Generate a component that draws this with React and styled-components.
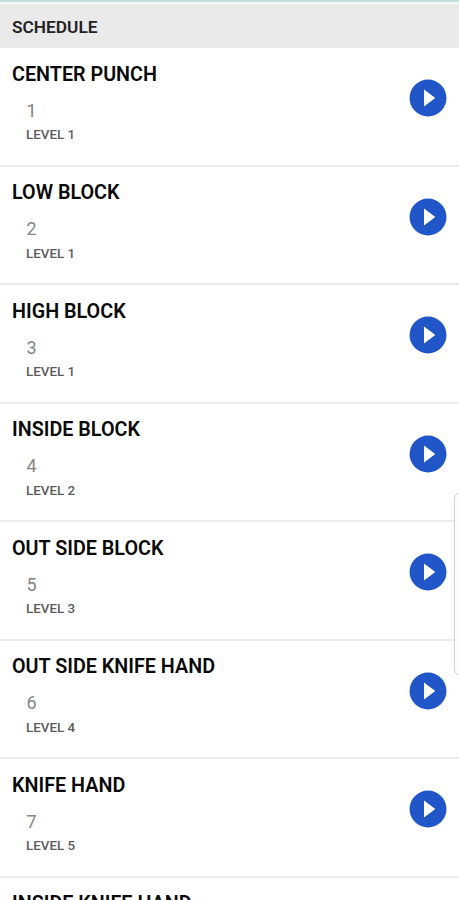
import React from 'react';
import styled, {createGlobalStyle} from 'styled-components';

const GlobalStyle = createGlobalStyle`
  * {
    box-sizing: border-box;
  }

  body {
    margin: 0;
    overflow: hidden;
    background: #fff;
    font-family: Roboto, Arial, sans-serif;
  }
`

const Screen = styled.div`
  position: relative;
  height: 900px;
  overflow: hidden;
`

const StatusStrip = styled.div`
  height: 4px;
  border-top: 2px solid #c5dadb;
  background: #f6f9f9;
`

const Header = styled.h1`
  height: 44px;
  margin: 0;
  padding: 0 12px;
  background: #eaeaea;
  color: #222;
  font-size: 17.3px;
  font-weight: 600;
  line-height: 46px;
`

const List = styled.ul`
  margin: 0;
  padding: 0;
  list-style: none;
`

const Row = styled.li`
  display: flex;
  justify-content: space-between;
  height: 118.55px;
  padding: 13.6px 12px 0;
  border-bottom: 2px solid #ebebeb;
`

const Title = styled.h2`
  margin: 0;
  color: #0a0a0a;
  font-size: 19.75px;
  font-weight: 600;
  line-height: 25px;
`

const Order = styled.p`
  margin: 13px 0 0 14.5px;
  color: #858585;
  font-size: 18px;
  line-height: 22px;
`

const Level = styled.p`
  margin: 4.6px 0 0 14px;
  color: #5c5c5c;
  font-size: 13.4px;
  font-weight: 500;
  line-height: 17px;
`

const PlayButton = styled.button`
  width: 38px;
  height: 38px;
  margin-top: 17.4px;
  padding: 0;
  border: none;
  background: none;
  cursor: pointer;

  svg {
    display: block;
  }
`

const EdgeHandle = styled.div`
  position: absolute;
  top: 492px;
  right: -8px;
  width: 13px;
  height: 184px;
  border: 1px solid #d2d2d2;
  border-radius: 7px;
  background: #fdfdfd;
`

const lessons = [
    {title: 'CENTER PUNCH', level: 1},
    {title: 'LOW BLOCK', level: 1},
    {title: 'HIGH BLOCK', level: 1},
    {title: 'INSIDE BLOCK', level: 2},
    {title: 'OUT SIDE BLOCK', level: 3},
    {title: 'OUT SIDE KNIFE HAND', level: 4},
    {title: 'KNIFE HAND', level: 5},
    {title: 'INSIDE KNIFE HAND', level: 6},
]

const Lesson = ({title, order, level}) => (
    <Row>
        <div>
            <Title>{title}</Title>
            <Order>{order}</Order>
            <Level>LEVEL {level}</Level>
        </div>
        <PlayButton type="button" aria-label={`Play ${title}`}>
            <svg width="38" height="38" viewBox="0 0 38 38">
                <circle cx="19" cy="19" r="18.5" fill="#2156c8"/>
                <path d="M15 10.5 L26.3 19 L15 27.5 Z" fill="#fff"/>
            </svg>
        </PlayButton>
    </Row>
)

const App = () => (
    <Screen>
        <GlobalStyle/>
        <StatusStrip/>
        <Header>SCHEDULE</Header>
        <List>
            {lessons.map((lesson, index) => (
                <Lesson key={lesson.title} order={index + 1} {...lesson}/>
            ))}
        </List>
        <EdgeHandle/>
    </Screen>
)

export default App;
